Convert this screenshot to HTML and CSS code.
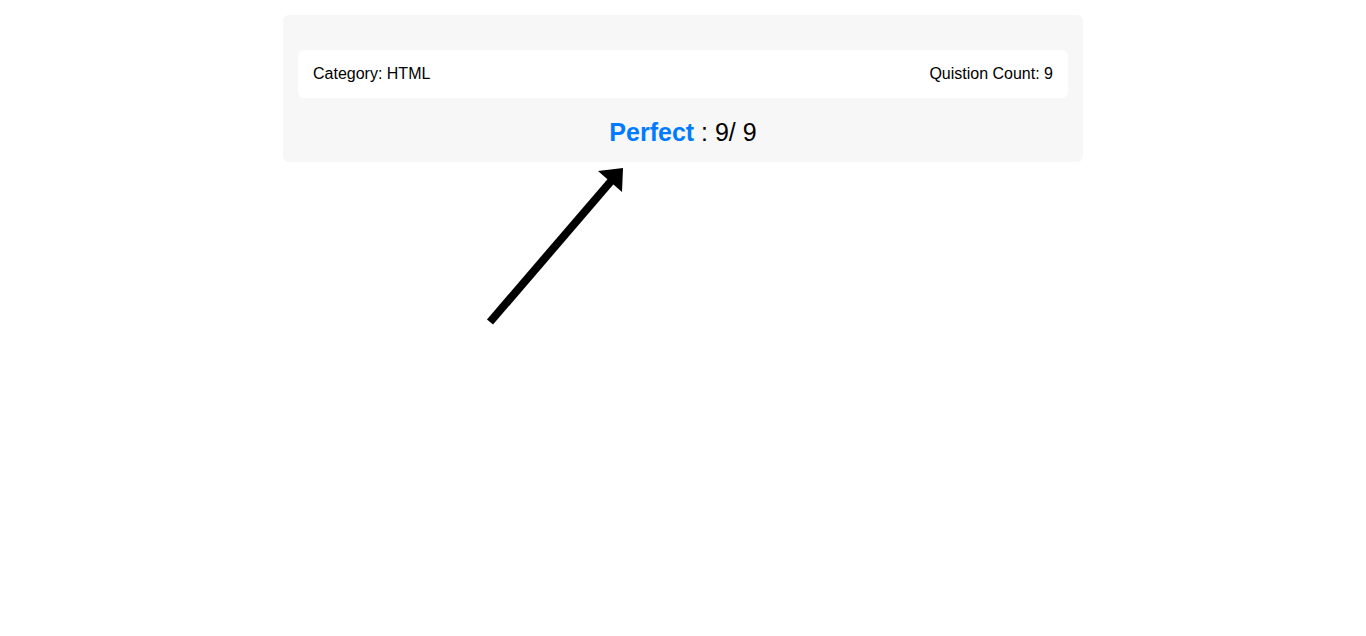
FILE: index.html
```html
<!DOCTYPE html>
<html>
<head>
<meta charset="utf-8">
<link rel="stylesheet" href="styles.css">
</head>
<body>
<div class="page">
  <div class="card">
    <div class="info">
      <span>Category: HTML</span>
      <span>Quistion Count: 9</span>
    </div>
    <div class="score"><span class="grade">Perfect</span> : 9/ 9</div>
  </div>
</div>
<svg class="arrow" width="1366" height="636" viewBox="0 0 1366 636">
  <line x1="490" y1="322" x2="612" y2="180" stroke="#000" stroke-width="8"/>
  <polygon points="623,168 598,171 622,192" fill="#000"/>
</svg>
</body>
</html>
```
FILE: styles.css
```css
html, body {
  margin: 0;
  padding: 0;
  background: #fff;
  font-family: "Liberation Sans", Arial, sans-serif;
  color: #000;
}
.page {
  display: flex;
  justify-content: center;
  padding-top: 15px;
}
.card {
  width: 800px;
  box-sizing: border-box;
  background: #f7f7f7;
  border-radius: 6px;
  padding: 35px 15px 15px;
}
.info {
  display: flex;
  justify-content: space-between;
  background: #fff;
  border-radius: 6px;
  padding: 15px;
  font-size: 16px;
  line-height: 18px;
}
.score {
  margin-top: 20px;
  text-align: center;
  font-size: 25px;
  line-height: 29px;
}
.grade {
  color: #007bff;
  font-weight: bold;
}
.arrow {
  position: absolute;
  left: 0;
  top: 0;
  pointer-events: none;
}
```
